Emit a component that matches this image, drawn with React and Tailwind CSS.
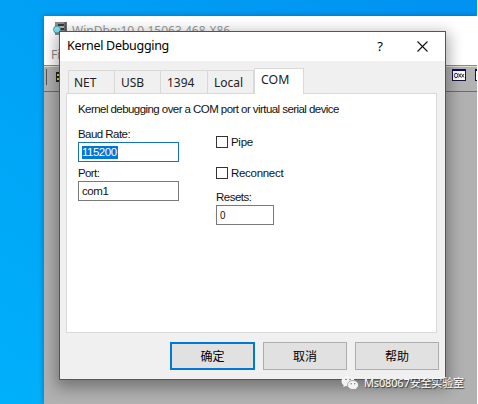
const segoe = "font-['Noto_Sans','Noto_Sans_CJK_SC',sans-serif]";
const small = "font-['Liberation_Sans',sans-serif] text-[11.5px] leading-[13px] text-[#111]";

function Tab({ label, className }) {
  return (
    <div className={`h-[23px] border-t border-r border-[#d9d9d9] bg-[#f0f0f0] text-[12px] leading-[23px] text-[#222] ${className}`}>
      {label}
    </div>
  );
}

function Button({ children, className }) {
  return (
    <button className={`flex h-7 items-center justify-center bg-[#e1e1e1] font-['Noto_Sans_CJK_SC',sans-serif] text-[12px] leading-none text-black ${className}`}>
      {children}
    </button>
  );
}

function Check({ label, spacing }) {
  return (
    <label className={`flex h-3 items-center gap-[3px] ${small}`}>
      <span className="size-3 border border-[#333] bg-white" />
      <span className={spacing}>{label}</span>
    </label>
  );
}

function ToolIcon() {
  return (
    <svg className="h-[12px] w-[14px] shrink-0" viewBox="0 0 14 12" shapeRendering="crispEdges">
      <rect width="14" height="12" fill="#16163c" />
      <rect width="14" height="2" fill="#08087a" />
      <rect x="1" y="2" width="12" height="9" fill="#fff" />
      <path d="M3 4.500h2l1 1.500-1 2.500H3L2.300 6.500zM6.500 4.500l2.500 4M9 4.500l-2.500 4M9.500 5l2.500 3.500M12 5l-2.500 3.500" fill="none" stroke="#222" strokeWidth=".9" shapeRendering="auto" />
    </svg>
  );
}

function MainWindow() {
  return (
    <div className={`absolute top-4 left-11 flex h-[388px] w-[433px] flex-col overflow-hidden bg-[#b1b1b1] shadow-[0_0_5px_rgba(0,30,70,0.4)] ${segoe}`}>
      <div className="flex h-[26px] shrink-0 items-start bg-white pt-[6px] pl-[9px]">
        <svg className="h-[15px] w-[15px] shrink-0" viewBox="0 0 15 15">
          <rect x="2" y="0" width="12" height="13" fill="#8a8a8a" />
          <path d="M12.500 0v13" stroke="#555" strokeWidth="2" />
          <path d="M5 3h6M7 7h4" stroke="#202020" strokeWidth="1.400" />
          <path d="M6 5h5" stroke="#ddd" />
          <circle cx="4" cy="7.500" r="3.500" fill="#7ee5f5" stroke="#4b7f8c" strokeWidth=".8" />
        </svg>
        <span className="ml-[4px] text-[12px] leading-[17px] whitespace-nowrap text-[#999]">WinDbg:10.0.15063.468-X86</span>
      </div>
      <div className="h-[23px] shrink-0 bg-white pt-[5px] pl-[7px] text-[12px] leading-[15px] text-[#888]">Fi</div>
      <div className="flex h-[27px] shrink-0 items-start border-t border-b border-t-[#8a8a8a] border-b-[#6c6c6c] bg-[#b2b2b2] pl-[2px] shadow-[inset_0_1px_#dedecb]">
        <span className="mt-[3px] h-4 w-px shrink-0 bg-[#555]" />
        <svg className="mt-[6px] ml-[9px] h-[10px] w-3 shrink-0" viewBox="0 0 12 10">
          <path d="M0 0h12v10H0z" fill="#222" />
          <path d="M1 2h3v2H1zM1 6h3v2H1z" fill="#e4dc58" />
        </svg>
        <div className="mt-[3px] ml-[384px] flex gap-[9px]">
          <ToolIcon />
          <ToolIcon />
        </div>
      </div>
    </div>
  );
}

function Dialog() {
  return (
    <div className={`absolute top-[31px] left-[59px] flex h-[349px] w-[387px] flex-col border border-[#555] bg-[#f0f0f0] shadow-[0_5px_14px_3px_rgba(0,0,0,0.33)] ${segoe}`}>
      <div className="flex h-[29px] shrink-0 items-center bg-white pl-[7px] text-black">
        <span className="text-[12.5px] leading-none tracking-[-0.3px]">Kernel Debugging</span>
        <span className="ml-auto text-[13px] leading-none">?</span>
        <svg className="mr-[17px] ml-[34px] size-[11px]" viewBox="0 0 11 11">
          <path d="M.5 .5l10 10M10.500 .5l-10 10" stroke="#111" strokeWidth="1.100" />
        </svg>
      </div>
      <div className="flex h-[32px] shrink-0 items-end pl-[8px]">
        <Tab label="NET" className="w-[47px] border-l pl-[5px]" />
        <Tab label="USB" className="w-[46px] pl-[6px]" />
        <Tab label="1394" className="w-[47px] pl-[6px]" />
        <Tab label="Local" className="w-[46px] pl-[6px]" />
        <div className="relative z-10 -mb-px h-[26px] w-[50px] border-t border-r border-l border-[#d9d9d9] bg-white pl-[6px] text-[12.3px] leading-[22px] text-[#222]">COM</div>
      </div>
      <div className={`mr-[8px] ml-[6px] h-[240px] w-[371px] shrink-0 border border-[#d9d9d9] bg-white pt-[9px] pl-[11px] ${small}`}>
        <p className="tracking-[-0.56px] whitespace-nowrap">Kernel debugging over a COM port or virtual serial device</p>
        <div className="mt-3 flex">
          <div className="w-[138px]">
            <div className="tracking-[-0.55px]">Baud Rate:</div>
            <div className="mt-px flex h-5 w-[101px] items-center border border-[#1472b8] pl-[3px]">
              <span className="border-r border-[#8a5a20] bg-[#0078d7] tracking-[-0.5px] text-white">115200</span>
            </div>
            <div className="mt-[5px] tracking-[-0.6px]">Port:</div>
            <div className="mt-px flex h-5 w-[101px] items-center border border-[#7a7a7a] pl-[3px] tracking-[-0.4px]">com1</div>
          </div>
          <div className="pt-[8px]">
            <Check label="Pipe" spacing="tracking-[-0.3px]" />
            <div className="mt-[19px]">
              <Check label="Reconnect" spacing="tracking-[-0.3px]" />
            </div>
            <div className="mt-[12px] tracking-[-0.5px]">Resets:</div>
            <div className="mt-px flex h-5 w-[58px] items-center border border-[#7a7a7a] pl-[3px]">
              <span className="origin-left scale-x-[.85]">0</span>
            </div>
          </div>
        </div>
      </div>
      <div className="mt-[9px] flex gap-2 pl-[110px]">
        <Button className="w-[85px] border-2 border-[#0078d7]">确定</Button>
        <Button className="w-[84px] border border-[#adadad]">取消</Button>
        <Button className="w-[84px] border border-[#adadad]">帮助</Button>
      </div>
    </div>
  );
}

function Watermark() {
  return (
    <div className="absolute top-[375px] left-[341px] flex items-start">
      <svg className="h-[16px] w-[18px] shrink-0" viewBox="0 0 18 16">
        <path d="M7 1C3 1 .5 3.300 .5 6.200c0 1.700.9 3 2.300 4l-.6 2 2.300-1.200c4.700 1.200 9-1 9-4.800C13.500 3.300 10.700 1 7 1z" fill="#f4f4f4" />
        <path d="M12 5.500c-3.200 0-5.500 1.900-5.500 4.500s2.300 4.500 5.500 4.500l2 -.3 1.900 1-.5-1.700c1.300-.8 2.100-2 2.100-3.500 0-2.600-2.300-4.500-5.500-4.500z" fill="#f4f4f4" stroke="#888" strokeWidth=".7" />
        <circle cx="5" cy="4.500" r=".8" fill="#777" />
        <circle cx="9" cy="4.500" r=".8" fill="#777" />
        <circle cx="10.200" cy="8.800" r=".7" fill="#777" />
        <circle cx="13.800" cy="8.800" r=".7" fill="#777" />
      </svg>
      <span className="ml-[5px] font-['Noto_Sans','Noto_Sans_CJK_SC',sans-serif] text-[11px] leading-[16px] tracking-[-0.15px] whitespace-nowrap text-white [text-shadow:1px_1px_1px_#333]">Ms08067安全实验室</span>
    </div>
  );
}

export default function App() {
  return (
    <div className="h-[404px] w-[478px] bg-white">
      <div className="relative h-full w-[477px] overflow-hidden bg-linear-to-tr from-[#00b0fb] to-[#0092f0]">
        <MainWindow />
        <Dialog />
        <Watermark />
      </div>
    </div>
  );
}
